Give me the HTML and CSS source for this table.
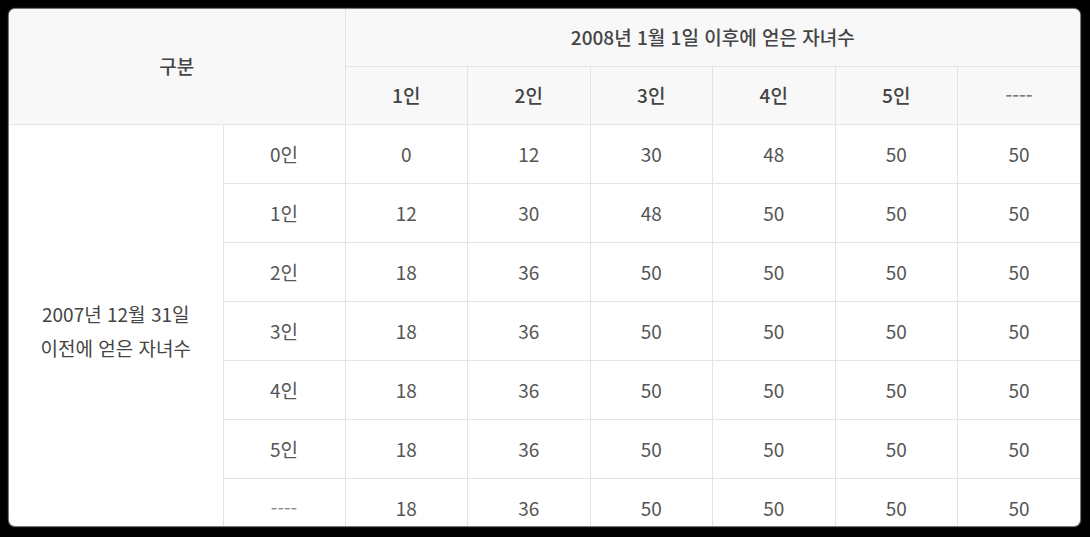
FILE: index.html
```html
<!DOCTYPE html>
<html lang="ko">
<head>
<meta charset="utf-8">
<link rel="stylesheet" href="styles.css">
</head>
<body>
<div class="frame">
  <table class="tbl">
    <colgroup>
      <col class="c-first">
      <col class="c-sub">
      <col class="c-data"><col class="c-data"><col class="c-data">
      <col class="c-data"><col class="c-data"><col class="c-data">
    </colgroup>
    <thead>
      <tr class="hr1">
        <th colspan="2" rowspan="2">구분</th>
        <th colspan="6">2008년 1월 1일 이후에 얻은 자녀수</th>
      </tr>
      <tr class="hr2">
        <th>1인</th><th>2인</th><th>3인</th><th>4인</th><th>5인</th><th class="dash">----</th>
      </tr>
    </thead>
    <tbody>
      <tr>
        <td rowspan="7" class="group">2007년 12월 31일<br>이전에 얻은 자녀수</td>
        <td>0인</td><td>0</td><td>12</td><td>30</td><td>48</td><td>50</td><td>50</td>
      </tr>
      <tr><td>1인</td><td>12</td><td>30</td><td>48</td><td>50</td><td>50</td><td>50</td></tr>
      <tr><td>2인</td><td>18</td><td>36</td><td>50</td><td>50</td><td>50</td><td>50</td></tr>
      <tr><td>3인</td><td>18</td><td>36</td><td>50</td><td>50</td><td>50</td><td>50</td></tr>
      <tr><td>4인</td><td>18</td><td>36</td><td>50</td><td>50</td><td>50</td><td>50</td></tr>
      <tr><td>5인</td><td>18</td><td>36</td><td>50</td><td>50</td><td>50</td><td>50</td></tr>
      <tr><td class="dash">----</td><td>18</td><td>36</td><td>50</td><td>50</td><td>50</td><td>50</td></tr>
    </tbody>
  </table>
</div>
</body>
</html>
```

FILE: styles.css
```css
html, body {
  margin: 0;
  padding: 0;
  background: #000;
}

body {
  padding: 9px 10px 0 9px;
  height: 537px;
  box-sizing: border-box;
  overflow: hidden;
}

.frame {
  width: 1071px;
  height: 517px;
  background: #fff;
  border-radius: 6px;
  overflow: hidden;
  box-shadow: 0 0 1px 1px rgba(190, 190, 190, 0.7);
}

.tbl {
  width: 1071px;
  border-collapse: collapse;
  table-layout: fixed;
  font-family: "Noto Sans CJK KR", "Noto Sans", sans-serif;
  font-size: 19px;
  color: #555;
}

.c-first { width: 214px; }
.c-sub { width: 122px; }
.c-data { width: 122.5px; }

.tbl th,
.tbl td {
  border: 1px solid #e4e4e4;
  text-align: center;
  vertical-align: middle;
  padding: 0;
  line-height: 34px;
}

.tbl tr > :first-child { border-left: 0; }
.tbl tr > :last-child { border-right: 0; }
.tbl thead tr:first-child th { border-top: 0; }

.tbl th {
  background: #f8f8f8;
  color: #444;
  font-weight: 500;
}

.hr1 { height: 57px; }
.hr2 { height: 58px; }
.tbl tbody tr { height: 59px; }

.tbl .dash { color: #888; }
.tbl th.dash { color: #777; }

.group { color: #444; }
```
